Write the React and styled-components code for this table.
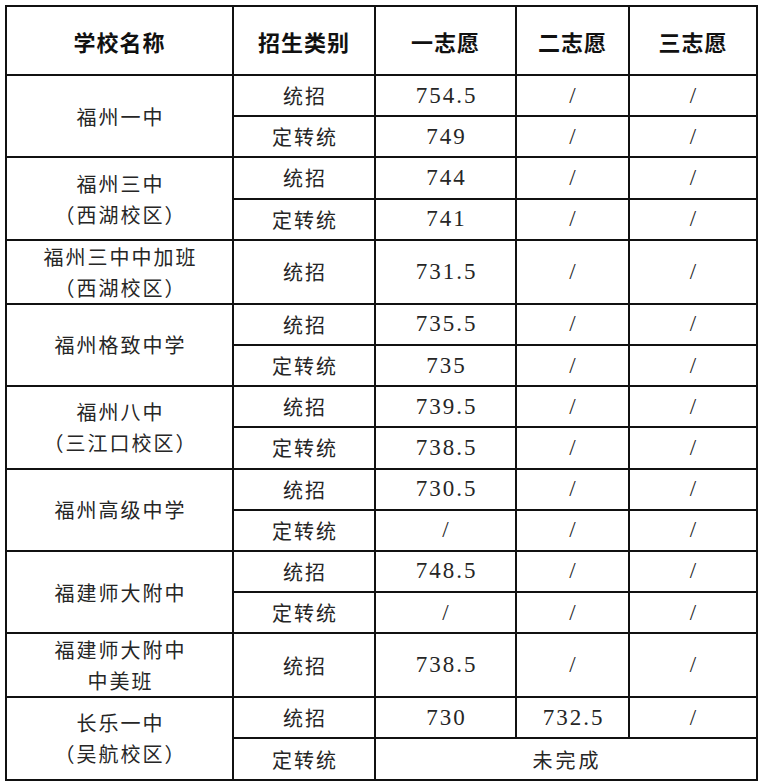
import React from "react";
import styled, { createGlobalStyle } from "styled-components";

const Global = createGlobalStyle`
  html, body { margin: 0; padding: 0; background: #fff; }
  body { font-family: "Liberation Serif", "Noto Sans CJK SC", serif; }
`;

const Wrap = styled.div`
  padding: 5px 0 0 5px;
`;

const Table = styled.table`
  border-collapse: collapse;
  table-layout: fixed;
  width: 751px;
  color: #262626;
`;

const Row = styled.tr`
  height: ${(p) => p.$h}px;
`;

const HeadCell = styled.th`
  border: 2px solid #111;
  padding: 0;
  text-align: center;
  vertical-align: middle;
  font-family: "Noto Sans CJK SC", sans-serif;
  font-weight: 700;
  font-size: 22px;
  letter-spacing: 1px;
  color: #111;
`;

const TextCell = styled.td`
  border: 2px solid #111;
  padding: 0 0 0 2px;
  text-align: center;
  vertical-align: middle;
  font-family: "Noto Sans CJK SC", sans-serif;
  font-size: 20px;
  letter-spacing: 2px;
  line-height: 31px;
`;

const ScoreCell = styled.td`
  border: 2px solid #111;
  padding: 0 0 0 2px;
  text-align: center;
  vertical-align: middle;
  font-family: "Liberation Serif", "Noto Sans CJK SC", serif;
  font-size: 23px;
  letter-spacing: 2px;
`;

const NoteCell = styled(TextCell)`
  letter-spacing: 3px;
`;

const NameLine = styled.div`
  white-space: nowrap;
`;

const cols = [227, 142, 141, 113, 128];

const schools = [
  { name: ["福州一中"], rows: [["统招", "754.5", "/", "/"], ["定转统", "749", "/", "/"]] },
  { name: ["福州三中", "（西湖校区）"], rows: [["统招", "744", "/", "/"], ["定转统", "741", "/", "/"]] },
  { name: ["福州三中中加班", "（西湖校区）"], rows: [["统招", "731.5", "/", "/"]], tall: true },
  { name: ["福州格致中学"], rows: [["统招", "735.5", "/", "/"], ["定转统", "735", "/", "/"]] },
  { name: ["福州八中", "（三江口校区）"], rows: [["统招", "739.5", "/", "/"], ["定转统", "738.5", "/", "/"]] },
  { name: ["福州高级中学"], rows: [["统招", "730.5", "/", "/"], ["定转统", "/", "/", "/"]] },
  { name: ["福建师大附中"], rows: [["统招", "748.5", "/", "/"], ["定转统", "/", "/", "/"]] },
  { name: ["福建师大附中", "中美班"], rows: [["统招", "738.5", "/", "/"]], tall: true },
  { name: ["长乐一中", "（吴航校区）"], rows: [["统招", "730", "732.5", "/"], ["定转统", "未完成"]] },
];

export default function App() {
  return (
    <Wrap>
      <Global />
      <Table>
        <colgroup>
          {cols.map((w, i) => (
            <col key={i} style={{ width: w }} />
          ))}
        </colgroup>
        <thead>
          <Row $h={69}>
            <HeadCell>学校名称</HeadCell>
            <HeadCell>招生类别</HeadCell>
            <HeadCell>一志愿</HeadCell>
            <HeadCell>二志愿</HeadCell>
            <HeadCell>三志愿</HeadCell>
          </Row>
        </thead>
        <tbody>
          {schools.map((s, si) =>
            s.rows.map((r, ri) => (
              <Row key={`${si}-${ri}`} $h={s.tall ? 64 : 41.2}>
                {ri === 0 && (
                  <TextCell rowSpan={s.rows.length}>
                    {s.name.map((n) => (
                      <NameLine key={n}>{n}</NameLine>
                    ))}
                  </TextCell>
                )}
                <TextCell>{r[0]}</TextCell>
                {r.length === 2 ? (
                  <NoteCell colSpan={3}>{r[1]}</NoteCell>
                ) : (
                  r.slice(1).map((v, vi) => <ScoreCell key={vi}>{v}</ScoreCell>)
                )}
              </Row>
            ))
          )}
        </tbody>
      </Table>
    </Wrap>
  );
}
